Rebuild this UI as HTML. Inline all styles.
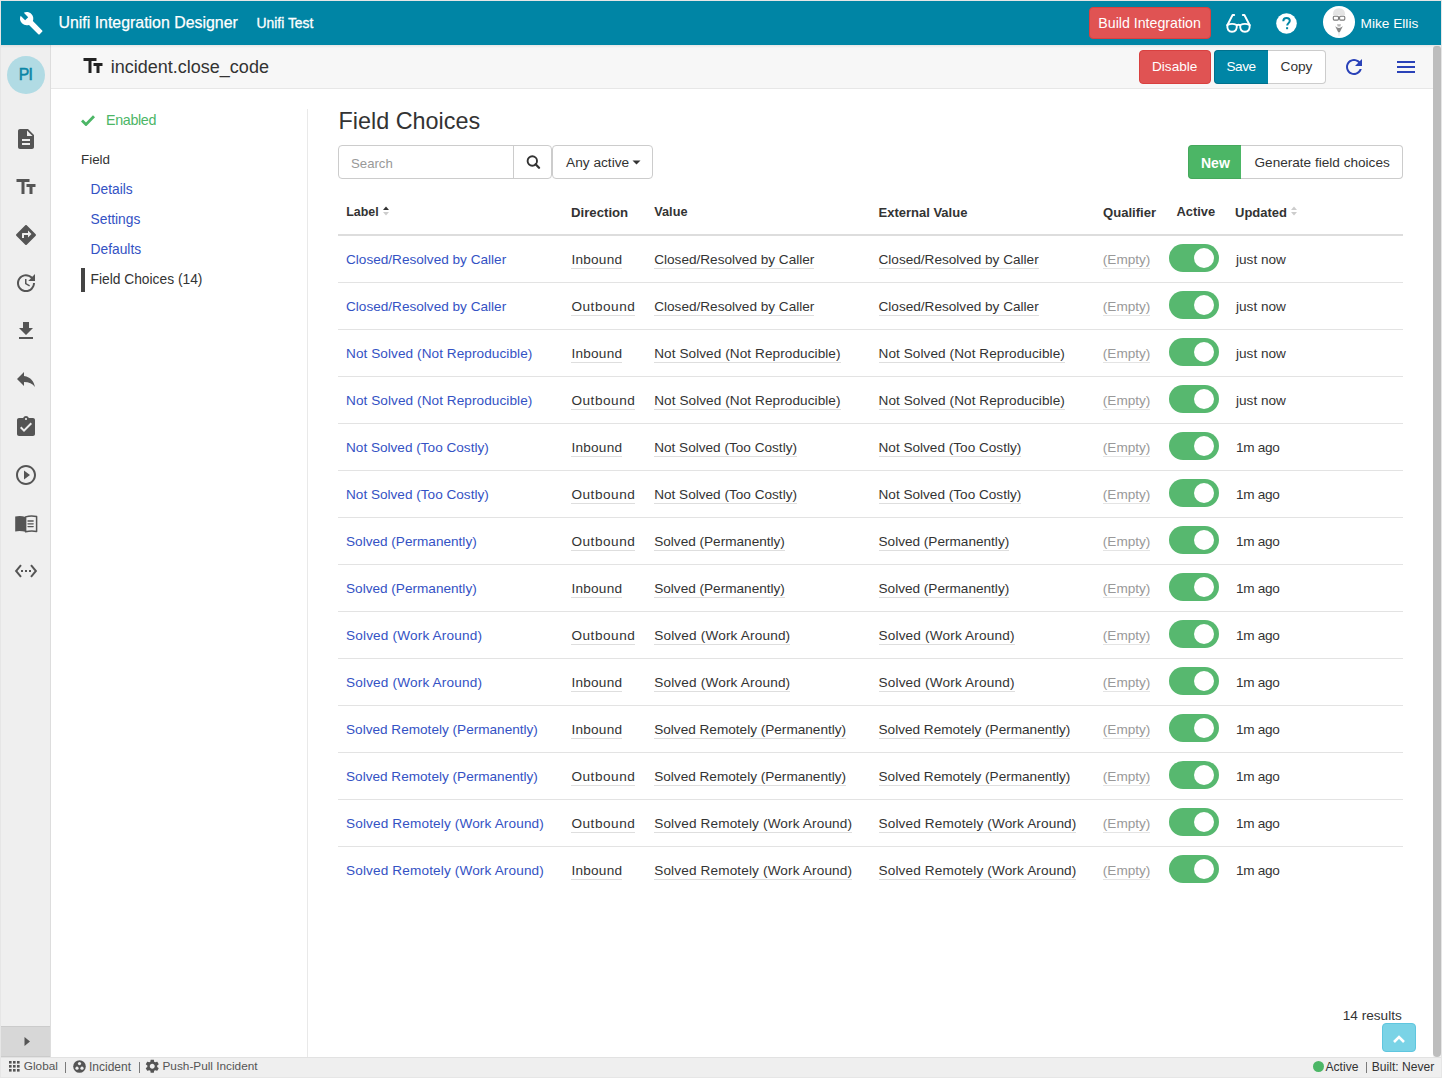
<!DOCTYPE html>
<html><head><meta charset="utf-8">
<style>
*{box-sizing:border-box}
html,body{margin:0;padding:0}
body{width:1442px;height:1078px;overflow:hidden;position:relative;background:#e6e6e6;font-family:"Liberation Sans",sans-serif;color:#333}
.abs{position:absolute}
.t{position:absolute;white-space:nowrap;line-height:1}
.u{border-bottom:1px solid #dedede;padding-bottom:1px}
.ue{border-bottom-color:#e4e4e4}
svg{display:block}
</style></head>
<body>
<div class="abs" style="left:1px;top:1px;width:1440px;height:44px;background:#0085a5;"></div>
<div class="abs" style="left:1px;top:45px;width:49px;height:1012px;background:#efefef;"></div>
<div class="abs" style="left:50px;top:45px;width:1px;height:1012px;background:#dddddd;"></div>
<div class="abs" style="left:51px;top:45px;width:1382px;height:43px;background:#f7f7f7;"></div>
<div class="abs" style="left:51px;top:88px;width:1382px;height:1px;background:#e7e7e7;"></div>
<div class="abs" style="left:51px;top:89px;width:1382px;height:968px;background:#ffffff;"></div>
<div class="abs" style="left:307px;top:109px;width:1px;height:948px;background:#e9e9e9;"></div>
<div class="abs" style="left:1433px;top:45px;width:8px;height:1012px;background:#f4f4f4;"></div>
<div class="abs" style="left:1433px;top:46px;width:8px;height:1011px;background:#bdbdbd;border-radius:3px 3px 4px 4px"></div>
<div class="abs" style="left:1px;top:1057px;width:1440px;height:20px;background:#efefef;border-top:1px solid #e2e2e2"></div>
<div class="abs" style="left:1px;top:45px;width:1440px;height:3px;background:linear-gradient(rgba(0,0,0,0.07),rgba(0,0,0,0));"></div>
<svg class="abs" style="left:18.85px;top:10.65px;" width="24.5" height="24.5" viewBox="0 0 24 24"><path fill="#fff" d="M22.7 19l-9.1-9.1c.9-2.3.4-5-1.5-6.9-2-2-5-2.4-7.4-1.3L9 6 6 9 1.6 4.7C.4 7.1.9 10.1 2.9 12.1c1.9 1.9 4.6 2.4 6.9 1.5l9.1 9.1c.4.4 1 .4 1.4 0l2.3-2.3c.5-.4.5-1.1.1-1.4z"/></svg>
<div class="t" style="left:58.5px;top:14.74px;font-size:15.9px;color:#fff;font-weight:400;-webkit-text-stroke:0.25px #fff">Unifi Integration Designer</div>
<div class="t" style="left:256.5px;top:17.43px;font-size:13.9px;color:#fff;font-weight:400;-webkit-text-stroke:0.3px #fff">Unifi Test</div>
<div class="abs" style="left:1089px;top:7px;width:122px;height:32px;background:#e05353;border:1px solid #d9403f;border-radius:4px"></div>
<div class="t" style="left:1098.3px;top:15.98px;font-size:14.2px;color:#fff;font-weight:400;">Build Integration</div>
<svg class="abs" style="left:1224px;top:12px;" width="30" height="22" viewBox="0 0 30 22"><g fill="none" stroke="#fff" stroke-width="1.9" stroke-linecap="round" stroke-linejoin="round"><path d="M3.3 13.2Q8 10.6 12.8 13.2Q13.2 19.8 8 19.8Q3 19.8 3.3 13.2Z"/><path d="M16.2 13.2Q21 10.6 25.7 13.2Q26 19.8 21 19.8Q15.8 19.8 16.2 13.2Z"/><path d="M12.8 13.2Q14.5 12.3 16.2 13.2"/><path d="M3.3 13.2L8.6 3h1.6"/><path d="M25.7 13.2L20.4 3h-1.6"/></g></svg>
<svg class="abs" style="left:1276px;top:12.5px;" width="21" height="21" viewBox="0 0 21 21"><circle cx="10.5" cy="10.5" r="10.3" fill="#fff"/><path d="M7.3 8.2c0-2 1.4-3.3 3.3-3.3 1.9 0 3.2 1.2 3.2 2.8 0 2.3-2.6 2.5-2.6 4.9" fill="none" stroke="#0085a5" stroke-width="2"/><rect x="10.1" y="14.2" width="2" height="2" fill="#0085a5"/></svg>
<svg class="abs" style="left:1323px;top:6px;" width="32" height="32" viewBox="0 0 32 32"><circle cx="16" cy="16" r="16" fill="#fff"/><path d="M9.8 9.2Q9.8 2.3 16 2.3Q22.2 2.3 22.2 9.2Z" fill="#e4e4e4"/><rect x="10.3" y="10.3" width="5.2" height="3.8" rx="1" fill="none" stroke="#7a7a7a" stroke-width="1.1"/><rect x="16.6" y="10.3" width="5.2" height="3.8" rx="1" fill="none" stroke="#7a7a7a" stroke-width="1.1"/><path d="M15.5 11h1.1" stroke="#7a7a7a" stroke-width="1"/><path d="M14 18.2h4l-.7 2.2h-2.6z" fill="#b5b5b5"/><path d="M12.2 20.2Q16 23.6 19.8 20.2L16.7 26.6h-1.4Z" fill="#888"/><path d="M15 26.6h2l-.4 3.4h-1.2z" fill="#ececec"/></svg>
<div class="t" style="left:1360.5px;top:17.20px;font-size:13.7px;color:#fff;font-weight:400;">Mike Ellis</div>
<div class="abs" style="left:7px;top:56px;width:38px;height:38px;background:#b1dbe4;border-radius:50%"></div>
<div class="t" style="left:18.7px;top:66.83px;font-size:15.8px;color:#0a86a6;font-weight:400;letter-spacing:-0.8px;-webkit-text-stroke:0.5px #0a86a6">PI</div>
<svg class="abs" style="left:14.0px;top:127.0px;" width="24" height="24" viewBox="0 0 24 24"><g fill="#555555"><path d="M14 2H6c-1.1 0-1.99.9-1.99 2L4 20c0 1.1.89 2 1.99 2H18c1.1 0 2-.9 2-2V8l-6-6zm2 16H8v-2h8v2zm0-4H8v-2h8v2zm-3-5V3.5L18.5 9H13z"/></g></svg>
<svg class="abs" style="left:14.0px;top:175.0px;" width="24" height="24" viewBox="0 0 24 24"><g fill="#555555"><path d="M2.5 4v3h5v12h3V7h5V4h-13zm19 5h-9v3h3v7h3v-7h3V9z"/></g></svg>
<svg class="abs" style="left:14.0px;top:223.0px;" width="24" height="24" viewBox="0 0 24 24"><g fill="#555555"><path d="M21.71 11.29l-9-9c-.39-.39-1.02-.39-1.41 0l-9 9c-.39.39-.39 1.02 0 1.41l9 9c.39.39 1.02.39 1.41 0l9-9c.39-.38.39-1.01 0-1.41zM14 14.5V12h-4v3H8v-4c0-.55.45-1 1-1h5V7.5l3.5 3.5-3.5 3.5z"/></g></svg>
<svg class="abs" style="left:14.0px;top:271.0px;" width="24" height="24" viewBox="0 0 24 24"><g fill="#555555"><path d="M21 10.12h-6.78l2.74-2.82c-2.73-2.7-7.15-2.8-9.88-.1-2.73 2.71-2.73 7.08 0 9.79s7.150 2.71 9.88 0C18.32 15.65 19 14.08 19 12.1h2c0 1.98-.88 4.55-2.64 6.29-3.510 3.48-9.21 3.48-12.72 0-3.5-3.47-3.53-9.11-.02-12.58s9.14-3.47 12.65 0L21 3v7.12zM12.5 8v4.25l3.5 2.08-.72 1.21L11 13V8h1.5z"/></g></svg>
<svg class="abs" style="left:14.0px;top:319.0px;" width="24" height="24" viewBox="0 0 24 24"><g fill="#555555"><path d="M19 9h-4V3H9v6H5l7 7 7-7zM5 18v2h14v-2H5z"/></g></svg>
<svg class="abs" style="left:14.0px;top:367.0px;" width="24" height="24" viewBox="0 0 24 24"><g fill="#555555"><path d="M10 9V5l-7 7 7 7v-4.1c5 0 8.5 1.6 11 5.1-1-5-4-10-11-11z"/></g></svg>
<svg class="abs" style="left:14.0px;top:415.0px;" width="24" height="24" viewBox="0 0 24 24"><g fill="#555555"><path d="M19 3h-4.18C14.4 1.84 13.3 1 12 1c-1.3 0-2.4.84-2.82 2H5c-1.1 0-2 .9-2 2v14c0 1.1.9 2 2 2h14c1.1 0 2-.9 2-2V5c0-1.1-.9-2-2-2zm-7 0c.55 0 1 .45 1 1s-.45 1-1 1-1-.45-1-1 .45-1 1-1zm-2 14l-4-4 1.41-1.41L10 14.170l6.59-6.59L18 9l-8 8z"/></g></svg>
<svg class="abs" style="left:14.0px;top:463.0px;" width="24" height="24" viewBox="0 0 24 24"><g fill="#555555"><path d="M10 16.5l6-4.5-6-4.5v9zM12 2C6.48 2 2 6.48 2 12s4.48 10 10 10 10-4.48 10-10S17.52 2 12 2zm0 18c-4.41 0-8-3.59-8-8s3.59-8 8-8 8 3.59 8 8-3.59 8-8 8z"/></g></svg>
<svg class="abs" style="left:14.0px;top:511.0px;" width="24" height="24" viewBox="0 0 24 24"><g fill="#555555"><path d="M1.2 5.6Q6 4.2 11.6 5.9V20.8Q6 19.2 1.2 20.4Z"/><path d="M11.6 5.9Q17 4.2 22.6 5.6V20.4Q17 19.2 11.6 20.8Z" fill="none" stroke="#555" stroke-width="1.5" stroke-linejoin="round"/><path d="M14 10h5.2M14 12.8h5.2M14 15.6h5.2" fill="none" stroke="#555" stroke-width="1.3" stroke-linecap="round"/></g></svg>
<svg class="abs" style="left:14.0px;top:559.0px;" width="24" height="24" viewBox="0 0 24 24"><g fill="#555555"><path d="M7.77 6.76L6.23 5.48.82 12l5.41 6.52 1.54-1.28L3.42 12l4.35-5.24zM7 13h2v-2H7v2zm10-2h-2v2h2v-2zm-6 2h2v-2h-2v2zm6.77-7.52l-1.54 1.28L20.58 12l-4.350 5.24 1.54 1.28L23.18 12l-5.41-6.52z"/></g></svg>
<div class="abs" style="left:1px;top:1026px;width:49px;height:31px;background:#d7d7d7;border-top:1px solid #cbcbcb;border-bottom:1px solid #cbcbcb"></div>
<svg class="abs" style="left:23px;top:1036px;" width="9" height="11" viewBox="0 0 9 11"><path d="M1.5 1L7 5.5 1.5 10z" fill="#555555"/></svg>
<svg class="abs" style="left:81px;top:54px;" width="24" height="24" viewBox="0 0 24 24"><path fill="#222" d="M2.5 4v3h5v12h3V7h5V4h-13zm19 5h-9v3h3v7h3v-7h3V9z"/></svg>
<div class="t" style="left:110.8px;top:57.96px;font-size:18px;color:#333;font-weight:400;">incident.close_code</div>
<div class="abs" style="left:1139px;top:50px;width:72px;height:34px;background:#e05353;border:1px solid #d9403f;border-radius:4px"></div>
<div class="t" style="left:1152.0px;top:60.49px;font-size:13.6px;color:#fff;font-weight:400;">Disable</div>
<div class="abs" style="left:1214px;top:50px;width:54px;height:34px;background:#0085a5;border:1px solid #00708c;border-right:0;border-radius:4px 0 0 4px"></div>
<div class="t" style="left:1226.5px;top:60.49px;font-size:13.6px;color:#fff;font-weight:400;letter-spacing:-0.5px">Save</div>
<div class="abs" style="left:1268px;top:50px;width:58px;height:34px;background:#fff;border:1px solid #cccccc;border-left:0;border-radius:0 4px 4px 0"></div>
<div class="t" style="left:1280.5px;top:60.40px;font-size:13.7px;color:#333;font-weight:400;">Copy</div>
<svg class="abs" style="left:1342px;top:55px;" width="24" height="24" viewBox="0 0 24 24"><path fill="#2a42b8" d="M17.65 6.35C16.2 4.9 14.21 4 12 4c-4.42 0-7.99 3.58-7.99 8s3.57 8 7.99 8c3.73 0 6.840-2.55 7.73-6h-2.08c-.82 2.33-3.04 4-5.65 4-3.31 0-6-2.69-6-6s2.69-6 6-6c1.66 0 3.14.69 4.22 1.780L13 11h7V4l-2.35 2.35z"/></svg>
<div class="abs" style="left:1397px;top:61px;width:18px;height:2px;background:#2a42b8;"></div>
<div class="abs" style="left:1397px;top:66px;width:18px;height:2px;background:#2a42b8;"></div>
<div class="abs" style="left:1397px;top:71px;width:18px;height:2px;background:#2a42b8;"></div>
<svg class="abs" style="left:81px;top:114px;" width="14" height="12" viewBox="0 0 14 12"><path d="M1 6.5l4 4L13 2.2" fill="none" stroke="#4cb666" stroke-width="2.8"/></svg>
<div class="t" style="left:106.0px;top:112.90px;font-size:14.3px;color:#4cb666;font-weight:400;letter-spacing:-0.35px">Enabled</div>
<div class="t" style="left:81.0px;top:153.26px;font-size:13.4px;color:#333;font-weight:400;">Field</div>
<div class="t" style="left:90.5px;top:183.32px;font-size:13.8px;color:#3452c4;font-weight:400;">Details</div>
<div class="t" style="left:90.5px;top:213.32px;font-size:13.8px;color:#3452c4;font-weight:400;">Settings</div>
<div class="t" style="left:90.5px;top:243.32px;font-size:13.8px;color:#3452c4;font-weight:400;">Defaults</div>
<div class="t" style="left:90.5px;top:273.12px;font-size:13.8px;color:#333;font-weight:400;">Field Choices (14)</div>
<div class="abs" style="left:81px;top:268px;width:4px;height:24px;background:#444;"></div>
<div class="t" style="left:338.5px;top:109.89px;font-size:23.4px;color:#333;font-weight:400;">Field Choices</div>
<div class="abs" style="left:338px;top:145px;width:214px;height:34px;background:#fff;border:1px solid #cccccc;border-radius:4px"></div>
<div class="abs" style="left:513px;top:145px;width:1px;height:34px;background:#cccccc;"></div>
<div class="t" style="left:351.0px;top:156.83px;font-size:13.2px;color:#999;font-weight:400;">Search</div>
<svg class="abs" style="left:525.5px;top:155.3px;" width="15" height="14" viewBox="0 0 15 14"><circle cx="6.3" cy="6" r="4.7" fill="none" stroke="#333" stroke-width="1.9"/><path d="M9.6 9.3l3.4 3.4" stroke="#333" stroke-width="2.3" stroke-linecap="round"/></svg>
<div class="abs" style="left:552px;top:145px;width:101px;height:34px;background:#fff;border:1px solid #cccccc;border-radius:4px"></div>
<div class="t" style="left:566.0px;top:156.40px;font-size:13.7px;color:#333;font-weight:400;">Any active</div>
<svg class="abs" style="left:631.5px;top:160px;" width="9" height="5" viewBox="0 0 9 5"><path d="M0.5 0.5h8L4.5 4.5z" fill="#333"/></svg>
<div class="abs" style="left:1188px;top:145px;width:53px;height:34px;background:#4cb666;border:1px solid #45a85c;border-right:0;border-radius:4px 0 0 4px"></div>
<div class="t" style="left:1201.0px;top:156.15px;font-size:14px;color:#fff;font-weight:700;">New</div>
<div class="abs" style="left:1241px;top:145px;width:162px;height:34px;background:#fff;border:1px solid #cccccc;border-left:0;border-radius:0 4px 4px 0"></div>
<div class="t" style="left:1254.5px;top:156.49px;font-size:13.6px;color:#333;font-weight:400;">Generate field choices</div>
<div class="t" style="left:346.3px;top:206.20px;font-size:12.4px;color:#333;font-weight:700;">Label</div>
<svg class="abs" style="left:382px;top:205px;" width="8" height="12" viewBox="0 0 8 12"><path d="M1 5h6L4 1.5z" fill="#333"/><path d="M1 7h6L4 10.5z" fill="#ccc"/></svg>
<div class="t" style="left:571.0px;top:205.53px;font-size:13.2px;color:#333;font-weight:700;">Direction</div>
<div class="t" style="left:654.3px;top:205.95px;font-size:12.7px;color:#333;font-weight:700;">Value</div>
<div class="t" style="left:878.5px;top:205.70px;font-size:13px;color:#333;font-weight:700;">External Value</div>
<div class="t" style="left:1103.0px;top:205.61px;font-size:13.1px;color:#333;font-weight:700;">Qualifier</div>
<div class="t" style="left:1176.5px;top:205.78px;font-size:12.9px;color:#333;font-weight:700;">Active</div>
<div class="t" style="left:1235.0px;top:205.70px;font-size:13px;color:#333;font-weight:700;">Updated</div>
<svg class="abs" style="left:1290px;top:205px;" width="8" height="12" viewBox="0 0 8 12"><path d="M1 5h6L4 1.5z" fill="#ccc"/><path d="M1 7h6L4 10.5z" fill="#ccc"/></svg>
<div class="abs" style="left:338px;top:234px;width:1065px;height:2px;background:#dddddd;"></div>
<div class="t" style="left:346.0px;top:252.79px;font-size:13.6px;color:#3452c4;font-weight:400;">Closed/Resolved by Caller</div>
<div class="t" style="left:571.4px;top:252.79px;font-size:13.6px;color:#333;font-weight:400;letter-spacing:0.25px"><span class="u">Inbound</span></div>
<div class="t" style="left:654.2px;top:252.79px;font-size:13.6px;color:#333;font-weight:400;"><span class="u">Closed/Resolved by Caller</span></div>
<div class="t" style="left:878.5px;top:252.79px;font-size:13.6px;color:#333;font-weight:400;"><span class="u">Closed/Resolved by Caller</span></div>
<div class="t" style="left:1102.8px;top:252.79px;font-size:13.6px;color:#999;font-weight:400;"><span class="u ue">(Empty)</span></div>
<div class="abs" style="left:1169px;top:244px;width:50px;height:28px;background:#57b86f;border-radius:14px"></div>
<div class="abs" style="left:1194px;top:248px;width:20px;height:20px;background:#fff;border-radius:50%"></div>
<div class="t" style="left:1236.0px;top:252.79px;font-size:13.6px;color:#333;font-weight:400;">just now</div>
<div class="abs" style="left:338px;top:282px;width:1065px;height:1px;background:#e3e3e3;"></div>
<div class="t" style="left:346.0px;top:299.79px;font-size:13.6px;color:#3452c4;font-weight:400;">Closed/Resolved by Caller</div>
<div class="t" style="left:571.4px;top:299.79px;font-size:13.6px;color:#333;font-weight:400;letter-spacing:0.54px"><span class="u">Outbound</span></div>
<div class="t" style="left:654.2px;top:299.79px;font-size:13.6px;color:#333;font-weight:400;"><span class="u">Closed/Resolved by Caller</span></div>
<div class="t" style="left:878.5px;top:299.79px;font-size:13.6px;color:#333;font-weight:400;"><span class="u">Closed/Resolved by Caller</span></div>
<div class="t" style="left:1102.8px;top:299.79px;font-size:13.6px;color:#999;font-weight:400;"><span class="u ue">(Empty)</span></div>
<div class="abs" style="left:1169px;top:291px;width:50px;height:28px;background:#57b86f;border-radius:14px"></div>
<div class="abs" style="left:1194px;top:295px;width:20px;height:20px;background:#fff;border-radius:50%"></div>
<div class="t" style="left:1236.0px;top:299.79px;font-size:13.6px;color:#333;font-weight:400;">just now</div>
<div class="abs" style="left:338px;top:329px;width:1065px;height:1px;background:#e3e3e3;"></div>
<div class="t" style="left:346.0px;top:346.79px;font-size:13.6px;color:#3452c4;font-weight:400;letter-spacing:0.07px">Not Solved (Not Reproducible)</div>
<div class="t" style="left:571.4px;top:346.79px;font-size:13.6px;color:#333;font-weight:400;letter-spacing:0.25px"><span class="u">Inbound</span></div>
<div class="t" style="left:654.2px;top:346.79px;font-size:13.6px;color:#333;font-weight:400;letter-spacing:0.07px"><span class="u">Not Solved (Not Reproducible)</span></div>
<div class="t" style="left:878.5px;top:346.79px;font-size:13.6px;color:#333;font-weight:400;letter-spacing:0.07px"><span class="u">Not Solved (Not Reproducible)</span></div>
<div class="t" style="left:1102.8px;top:346.79px;font-size:13.6px;color:#999;font-weight:400;"><span class="u ue">(Empty)</span></div>
<div class="abs" style="left:1169px;top:338px;width:50px;height:28px;background:#57b86f;border-radius:14px"></div>
<div class="abs" style="left:1194px;top:342px;width:20px;height:20px;background:#fff;border-radius:50%"></div>
<div class="t" style="left:1236.0px;top:346.79px;font-size:13.6px;color:#333;font-weight:400;">just now</div>
<div class="abs" style="left:338px;top:376px;width:1065px;height:1px;background:#e3e3e3;"></div>
<div class="t" style="left:346.0px;top:393.79px;font-size:13.6px;color:#3452c4;font-weight:400;letter-spacing:0.07px">Not Solved (Not Reproducible)</div>
<div class="t" style="left:571.4px;top:393.79px;font-size:13.6px;color:#333;font-weight:400;letter-spacing:0.54px"><span class="u">Outbound</span></div>
<div class="t" style="left:654.2px;top:393.79px;font-size:13.6px;color:#333;font-weight:400;letter-spacing:0.07px"><span class="u">Not Solved (Not Reproducible)</span></div>
<div class="t" style="left:878.5px;top:393.79px;font-size:13.6px;color:#333;font-weight:400;letter-spacing:0.07px"><span class="u">Not Solved (Not Reproducible)</span></div>
<div class="t" style="left:1102.8px;top:393.79px;font-size:13.6px;color:#999;font-weight:400;"><span class="u ue">(Empty)</span></div>
<div class="abs" style="left:1169px;top:385px;width:50px;height:28px;background:#57b86f;border-radius:14px"></div>
<div class="abs" style="left:1194px;top:389px;width:20px;height:20px;background:#fff;border-radius:50%"></div>
<div class="t" style="left:1236.0px;top:393.79px;font-size:13.6px;color:#333;font-weight:400;">just now</div>
<div class="abs" style="left:338px;top:423px;width:1065px;height:1px;background:#e3e3e3;"></div>
<div class="t" style="left:346.0px;top:440.79px;font-size:13.6px;color:#3452c4;font-weight:400;">Not Solved (Too Costly)</div>
<div class="t" style="left:571.4px;top:440.79px;font-size:13.6px;color:#333;font-weight:400;letter-spacing:0.25px"><span class="u">Inbound</span></div>
<div class="t" style="left:654.2px;top:440.79px;font-size:13.6px;color:#333;font-weight:400;"><span class="u">Not Solved (Too Costly)</span></div>
<div class="t" style="left:878.5px;top:440.79px;font-size:13.6px;color:#333;font-weight:400;"><span class="u">Not Solved (Too Costly)</span></div>
<div class="t" style="left:1102.8px;top:440.79px;font-size:13.6px;color:#999;font-weight:400;"><span class="u ue">(Empty)</span></div>
<div class="abs" style="left:1169px;top:432px;width:50px;height:28px;background:#57b86f;border-radius:14px"></div>
<div class="abs" style="left:1194px;top:436px;width:20px;height:20px;background:#fff;border-radius:50%"></div>
<div class="t" style="left:1236.0px;top:440.79px;font-size:13.6px;color:#333;font-weight:400;letter-spacing:-0.3px">1m ago</div>
<div class="abs" style="left:338px;top:470px;width:1065px;height:1px;background:#e3e3e3;"></div>
<div class="t" style="left:346.0px;top:487.79px;font-size:13.6px;color:#3452c4;font-weight:400;">Not Solved (Too Costly)</div>
<div class="t" style="left:571.4px;top:487.79px;font-size:13.6px;color:#333;font-weight:400;letter-spacing:0.54px"><span class="u">Outbound</span></div>
<div class="t" style="left:654.2px;top:487.79px;font-size:13.6px;color:#333;font-weight:400;"><span class="u">Not Solved (Too Costly)</span></div>
<div class="t" style="left:878.5px;top:487.79px;font-size:13.6px;color:#333;font-weight:400;"><span class="u">Not Solved (Too Costly)</span></div>
<div class="t" style="left:1102.8px;top:487.79px;font-size:13.6px;color:#999;font-weight:400;"><span class="u ue">(Empty)</span></div>
<div class="abs" style="left:1169px;top:479px;width:50px;height:28px;background:#57b86f;border-radius:14px"></div>
<div class="abs" style="left:1194px;top:483px;width:20px;height:20px;background:#fff;border-radius:50%"></div>
<div class="t" style="left:1236.0px;top:487.79px;font-size:13.6px;color:#333;font-weight:400;letter-spacing:-0.3px">1m ago</div>
<div class="abs" style="left:338px;top:517px;width:1065px;height:1px;background:#e3e3e3;"></div>
<div class="t" style="left:346.0px;top:534.79px;font-size:13.6px;color:#3452c4;font-weight:400;">Solved (Permanently)</div>
<div class="t" style="left:571.4px;top:534.79px;font-size:13.6px;color:#333;font-weight:400;letter-spacing:0.54px"><span class="u">Outbound</span></div>
<div class="t" style="left:654.2px;top:534.79px;font-size:13.6px;color:#333;font-weight:400;"><span class="u">Solved (Permanently)</span></div>
<div class="t" style="left:878.5px;top:534.79px;font-size:13.6px;color:#333;font-weight:400;"><span class="u">Solved (Permanently)</span></div>
<div class="t" style="left:1102.8px;top:534.79px;font-size:13.6px;color:#999;font-weight:400;"><span class="u ue">(Empty)</span></div>
<div class="abs" style="left:1169px;top:526px;width:50px;height:28px;background:#57b86f;border-radius:14px"></div>
<div class="abs" style="left:1194px;top:530px;width:20px;height:20px;background:#fff;border-radius:50%"></div>
<div class="t" style="left:1236.0px;top:534.79px;font-size:13.6px;color:#333;font-weight:400;letter-spacing:-0.3px">1m ago</div>
<div class="abs" style="left:338px;top:564px;width:1065px;height:1px;background:#e3e3e3;"></div>
<div class="t" style="left:346.0px;top:581.79px;font-size:13.6px;color:#3452c4;font-weight:400;">Solved (Permanently)</div>
<div class="t" style="left:571.4px;top:581.79px;font-size:13.6px;color:#333;font-weight:400;letter-spacing:0.25px"><span class="u">Inbound</span></div>
<div class="t" style="left:654.2px;top:581.79px;font-size:13.6px;color:#333;font-weight:400;"><span class="u">Solved (Permanently)</span></div>
<div class="t" style="left:878.5px;top:581.79px;font-size:13.6px;color:#333;font-weight:400;"><span class="u">Solved (Permanently)</span></div>
<div class="t" style="left:1102.8px;top:581.79px;font-size:13.6px;color:#999;font-weight:400;"><span class="u ue">(Empty)</span></div>
<div class="abs" style="left:1169px;top:573px;width:50px;height:28px;background:#57b86f;border-radius:14px"></div>
<div class="abs" style="left:1194px;top:577px;width:20px;height:20px;background:#fff;border-radius:50%"></div>
<div class="t" style="left:1236.0px;top:581.79px;font-size:13.6px;color:#333;font-weight:400;letter-spacing:-0.3px">1m ago</div>
<div class="abs" style="left:338px;top:611px;width:1065px;height:1px;background:#e3e3e3;"></div>
<div class="t" style="left:346.0px;top:628.79px;font-size:13.6px;color:#3452c4;font-weight:400;letter-spacing:0.17px">Solved (Work Around)</div>
<div class="t" style="left:571.4px;top:628.79px;font-size:13.6px;color:#333;font-weight:400;letter-spacing:0.54px"><span class="u">Outbound</span></div>
<div class="t" style="left:654.2px;top:628.79px;font-size:13.6px;color:#333;font-weight:400;letter-spacing:0.17px"><span class="u">Solved (Work Around)</span></div>
<div class="t" style="left:878.5px;top:628.79px;font-size:13.6px;color:#333;font-weight:400;letter-spacing:0.17px"><span class="u">Solved (Work Around)</span></div>
<div class="t" style="left:1102.8px;top:628.79px;font-size:13.6px;color:#999;font-weight:400;"><span class="u ue">(Empty)</span></div>
<div class="abs" style="left:1169px;top:620px;width:50px;height:28px;background:#57b86f;border-radius:14px"></div>
<div class="abs" style="left:1194px;top:624px;width:20px;height:20px;background:#fff;border-radius:50%"></div>
<div class="t" style="left:1236.0px;top:628.79px;font-size:13.6px;color:#333;font-weight:400;letter-spacing:-0.3px">1m ago</div>
<div class="abs" style="left:338px;top:658px;width:1065px;height:1px;background:#e3e3e3;"></div>
<div class="t" style="left:346.0px;top:675.79px;font-size:13.6px;color:#3452c4;font-weight:400;letter-spacing:0.17px">Solved (Work Around)</div>
<div class="t" style="left:571.4px;top:675.79px;font-size:13.6px;color:#333;font-weight:400;letter-spacing:0.25px"><span class="u">Inbound</span></div>
<div class="t" style="left:654.2px;top:675.79px;font-size:13.6px;color:#333;font-weight:400;letter-spacing:0.17px"><span class="u">Solved (Work Around)</span></div>
<div class="t" style="left:878.5px;top:675.79px;font-size:13.6px;color:#333;font-weight:400;letter-spacing:0.17px"><span class="u">Solved (Work Around)</span></div>
<div class="t" style="left:1102.8px;top:675.79px;font-size:13.6px;color:#999;font-weight:400;"><span class="u ue">(Empty)</span></div>
<div class="abs" style="left:1169px;top:667px;width:50px;height:28px;background:#57b86f;border-radius:14px"></div>
<div class="abs" style="left:1194px;top:671px;width:20px;height:20px;background:#fff;border-radius:50%"></div>
<div class="t" style="left:1236.0px;top:675.79px;font-size:13.6px;color:#333;font-weight:400;letter-spacing:-0.3px">1m ago</div>
<div class="abs" style="left:338px;top:705px;width:1065px;height:1px;background:#e3e3e3;"></div>
<div class="t" style="left:346.0px;top:722.79px;font-size:13.6px;color:#3452c4;font-weight:400;">Solved Remotely (Permanently)</div>
<div class="t" style="left:571.4px;top:722.79px;font-size:13.6px;color:#333;font-weight:400;letter-spacing:0.25px"><span class="u">Inbound</span></div>
<div class="t" style="left:654.2px;top:722.79px;font-size:13.6px;color:#333;font-weight:400;"><span class="u">Solved Remotely (Permanently)</span></div>
<div class="t" style="left:878.5px;top:722.79px;font-size:13.6px;color:#333;font-weight:400;"><span class="u">Solved Remotely (Permanently)</span></div>
<div class="t" style="left:1102.8px;top:722.79px;font-size:13.6px;color:#999;font-weight:400;"><span class="u ue">(Empty)</span></div>
<div class="abs" style="left:1169px;top:714px;width:50px;height:28px;background:#57b86f;border-radius:14px"></div>
<div class="abs" style="left:1194px;top:718px;width:20px;height:20px;background:#fff;border-radius:50%"></div>
<div class="t" style="left:1236.0px;top:722.79px;font-size:13.6px;color:#333;font-weight:400;letter-spacing:-0.3px">1m ago</div>
<div class="abs" style="left:338px;top:752px;width:1065px;height:1px;background:#e3e3e3;"></div>
<div class="t" style="left:346.0px;top:769.79px;font-size:13.6px;color:#3452c4;font-weight:400;">Solved Remotely (Permanently)</div>
<div class="t" style="left:571.4px;top:769.79px;font-size:13.6px;color:#333;font-weight:400;letter-spacing:0.54px"><span class="u">Outbound</span></div>
<div class="t" style="left:654.2px;top:769.79px;font-size:13.6px;color:#333;font-weight:400;"><span class="u">Solved Remotely (Permanently)</span></div>
<div class="t" style="left:878.5px;top:769.79px;font-size:13.6px;color:#333;font-weight:400;"><span class="u">Solved Remotely (Permanently)</span></div>
<div class="t" style="left:1102.8px;top:769.79px;font-size:13.6px;color:#999;font-weight:400;"><span class="u ue">(Empty)</span></div>
<div class="abs" style="left:1169px;top:761px;width:50px;height:28px;background:#57b86f;border-radius:14px"></div>
<div class="abs" style="left:1194px;top:765px;width:20px;height:20px;background:#fff;border-radius:50%"></div>
<div class="t" style="left:1236.0px;top:769.79px;font-size:13.6px;color:#333;font-weight:400;letter-spacing:-0.3px">1m ago</div>
<div class="abs" style="left:338px;top:799px;width:1065px;height:1px;background:#e3e3e3;"></div>
<div class="t" style="left:346.0px;top:816.79px;font-size:13.6px;color:#3452c4;font-weight:400;letter-spacing:0.14px">Solved Remotely (Work Around)</div>
<div class="t" style="left:571.4px;top:816.79px;font-size:13.6px;color:#333;font-weight:400;letter-spacing:0.54px"><span class="u">Outbound</span></div>
<div class="t" style="left:654.2px;top:816.79px;font-size:13.6px;color:#333;font-weight:400;letter-spacing:0.14px"><span class="u">Solved Remotely (Work Around)</span></div>
<div class="t" style="left:878.5px;top:816.79px;font-size:13.6px;color:#333;font-weight:400;letter-spacing:0.14px"><span class="u">Solved Remotely (Work Around)</span></div>
<div class="t" style="left:1102.8px;top:816.79px;font-size:13.6px;color:#999;font-weight:400;"><span class="u ue">(Empty)</span></div>
<div class="abs" style="left:1169px;top:808px;width:50px;height:28px;background:#57b86f;border-radius:14px"></div>
<div class="abs" style="left:1194px;top:812px;width:20px;height:20px;background:#fff;border-radius:50%"></div>
<div class="t" style="left:1236.0px;top:816.79px;font-size:13.6px;color:#333;font-weight:400;letter-spacing:-0.3px">1m ago</div>
<div class="abs" style="left:338px;top:846px;width:1065px;height:1px;background:#e3e3e3;"></div>
<div class="t" style="left:346.0px;top:863.79px;font-size:13.6px;color:#3452c4;font-weight:400;letter-spacing:0.14px">Solved Remotely (Work Around)</div>
<div class="t" style="left:571.4px;top:863.79px;font-size:13.6px;color:#333;font-weight:400;letter-spacing:0.25px"><span class="u">Inbound</span></div>
<div class="t" style="left:654.2px;top:863.79px;font-size:13.6px;color:#333;font-weight:400;letter-spacing:0.14px"><span class="u">Solved Remotely (Work Around)</span></div>
<div class="t" style="left:878.5px;top:863.79px;font-size:13.6px;color:#333;font-weight:400;letter-spacing:0.14px"><span class="u">Solved Remotely (Work Around)</span></div>
<div class="t" style="left:1102.8px;top:863.79px;font-size:13.6px;color:#999;font-weight:400;"><span class="u ue">(Empty)</span></div>
<div class="abs" style="left:1169px;top:855px;width:50px;height:28px;background:#57b86f;border-radius:14px"></div>
<div class="abs" style="left:1194px;top:859px;width:20px;height:20px;background:#fff;border-radius:50%"></div>
<div class="t" style="left:1236.0px;top:863.79px;font-size:13.6px;color:#333;font-weight:400;letter-spacing:-0.3px">1m ago</div>
<div class="t" style="left:1342.8px;top:1008.79px;font-size:13.6px;color:#333;font-weight:400;">14 results</div>
<div class="abs" style="left:1382px;top:1023px;width:34px;height:29px;background:#7ad3e6;border:1px solid #5fc6df;border-radius:4px"></div>
<svg class="abs" style="left:1391px;top:1031.5px;" width="16" height="14" viewBox="0 0 16 14"><path d="M3 10l5-5 5 5" fill="none" stroke="#fff" stroke-width="2.6"/></svg>
<svg class="abs" style="left:9px;top:1061px;" width="11" height="11" viewBox="0 0 11 11"><g fill="#555555"><rect x="0" y="0" width="2.6" height="2.6"/><rect x="0" y="4" width="2.6" height="2.6"/><rect x="0" y="8" width="2.6" height="2.6"/><rect x="4" y="0" width="2.6" height="2.6"/><rect x="4" y="4" width="2.6" height="2.6"/><rect x="4" y="8" width="2.6" height="2.6"/><rect x="8" y="0" width="2.6" height="2.6"/><rect x="8" y="4" width="2.6" height="2.6"/><rect x="8" y="8" width="2.6" height="2.6"/></g></svg>
<div class="t" style="left:23.8px;top:1061.41px;font-size:11.8px;color:#555;font-weight:400;">Global</div>
<div class="abs" style="left:65px;top:1062px;width:1px;height:11px;background:#7a7a7a;"></div>
<svg class="abs" style="left:73px;top:1060px;" width="13" height="13" viewBox="0 0 13 13"><circle cx="6.5" cy="6.5" r="6.3" fill="#555555"/><circle cx="6.5" cy="3.6" r="1.6" fill="#efefef"/><circle cx="4" cy="8.2" r="1.6" fill="#efefef"/><circle cx="9" cy="8.2" r="1.6" fill="#efefef"/></svg>
<div class="t" style="left:89.0px;top:1061.24px;font-size:12px;color:#555;font-weight:400;">Incident</div>
<div class="abs" style="left:138.5px;top:1062px;width:1px;height:11px;background:#7a7a7a;"></div>
<svg class="abs" style="left:144px;top:1058px;" width="16.5" height="16.5" viewBox="0 0 24 24"><path fill="#555555" d="M19.14 12.94c.04-.3.06-.61.06-.94 0-.32-.02-.64-.07-.94l2.03-1.58c.18-.14.23-.41.12-.61l-1.92-3.32c-.12-.22-.37-.29-.59-.22l-2.39.96c-.5-.38-1.03-.7-1.62-.94l-.36-2.54c-.04-.24-.24-.41-.48-.41h-3.84c-.24 0-.43.17-.47.41l-.36 2.54c-.59.24-1.13.57-1.62.94l-2.39-.96c-.22-.08-.47 0-.59.22L2.74 8.87c-.12.21-.08.47.12.61l2.03 1.58c-.05.3-.09.63-.09.94s.02.64.07.94l-2.03 1.58c-.18.14-.23.41-.12.61l1.92 3.32c.12.22.37.29.59.22l2.39-.96c.5.38 1.03.7 1.62.94l.36 2.54c.05.24.24.41.48.41h3.84c.24 0 .44-.17.47-.41l.36-2.54c.59-.24 1.13-.56 1.62-.94l2.39.96c.22.08.47 0 .59-.22l1.92-3.32c.12-.22.07-.47-.12-.61l-2.01-1.58zM12 15.6c-1.98 0-3.6-1.62-3.6-3.6s1.62-3.6 3.6-3.6 3.6 1.62 3.6 3.6-1.62 3.6-3.6 3.6z"/></svg>
<div class="t" style="left:162.5px;top:1061.41px;font-size:11.8px;color:#555;font-weight:400;">Push-Pull Incident</div>
<div class="abs" style="left:1313px;top:1061px;width:11px;height:11px;background:#4cb666;border-radius:50%"></div>
<div class="t" style="left:1325.5px;top:1061.16px;font-size:12.1px;color:#333;font-weight:400;">Active</div>
<div class="abs" style="left:1365.5px;top:1062px;width:1px;height:11px;background:#7a7a7a;"></div>
<div class="t" style="left:1371.8px;top:1061.16px;font-size:12.1px;color:#333;font-weight:400;">Built: Never</div>
</body></html>
